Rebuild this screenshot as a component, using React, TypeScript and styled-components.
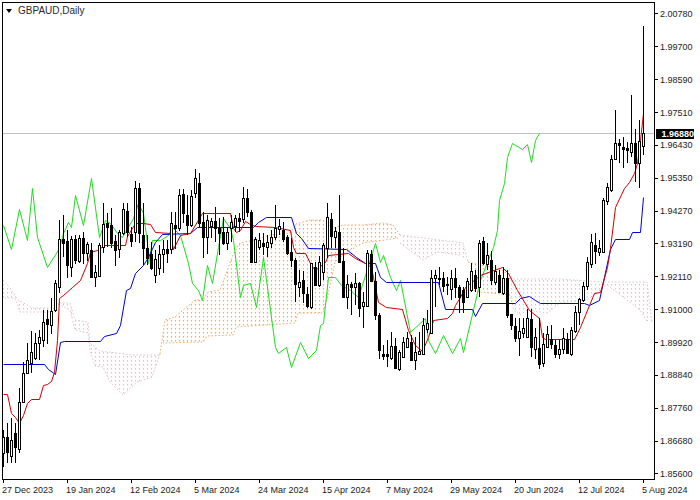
import React from "react";
import styled, { createGlobalStyle } from "styled-components";

const GlobalStyle = createGlobalStyle`
  html, body {
    margin: 0;
    padding: 0;
    background: #fff;
  }
`;

const Page = styled.div`
  width: 700px;
  height: 500px;
  overflow: hidden;
  background: #fff;
  color: #1c1c1c;
  font-family: "Liberation Sans", Arial, sans-serif;
  font-size: 9px;
  padding: 2px 0 0 2px;
  box-sizing: border-box;
`;
const Main = styled.div`
  display: flex;
  height: 478px;
`;
const Plot = styled.div`
  position: relative;
  width: 653px;
  height: 478px;
  box-sizing: border-box;
  border: 1px solid #000;
`;
const Canvas = styled.svg`
  display: block;
  width: 651px;
  height: 476px;
`;
const Title = styled.div`
  position: absolute;
  top: 2px;
  left: 3px;
  display: flex;
  align-items: center;
  gap: 6px;
  font-size: 10px;
  line-height: 12px;
  color: #2a2a2a;
`;
const Arrow = styled.i`
  width: 0;
  height: 0;
  border-left: 3.5px solid transparent;
  border-right: 3.5px solid transparent;
  border-top: 4px solid #000;
`;
const PriceAxis = styled.div`
  position: relative;
  display: flex;
  flex-direction: column;
  gap: 21px;
  padding-top: 6px;
`;
const PriceRow = styled.div`
  display: flex;
  align-items: center;
  height: 12px;
  gap: 2px;
`;
const PriceTick = styled.i`
  width: 3px;
  height: 1px;
  background: #000;
`;
const PriceTag = styled.div`
  position: absolute;
  top: 127px;
  left: 1px;
  width: 38px;
  height: 10px;
  background: #000;
  color: #fff;
  font-weight: 700;
  font-size: 9px;
  line-height: 10px;
  text-align: right;
`;
const TimeAxis = styled.div`
  display: flex;
`;
const TimeCell = styled.div`
  flex: none;
  width: 64px;
  white-space: nowrap;
`;
const TimeTick = styled.i`
  display: block;
  width: 1px;
  height: 3px;
  margin-left: 1px;
  background: #000;
`;
const TimeLabel = styled.div`
  line-height: 12px;
  margin-top: 1px;
`;
const Trace = styled.polyline<{ $color: string }>`
  fill: none;
  stroke: ${(p) => p.$color};
  stroke-width: 1;
  stroke-linejoin: round;
`;
const Edge = styled.polyline<{ $color: string }>`
  fill: none;
  stroke: ${(p) => p.$color};
  stroke-width: 1;
  stroke-dasharray: 1.5 2;
`;
const HatchLine = styled.line<{ $color: string }>`
  stroke: ${(p) => p.$color};
  stroke-width: 1.2;
  stroke-dasharray: 1.5 2.5;
`;
const Wick = styled.line`
  stroke: #000;
  stroke-width: 1;
  shape-rendering: crispEdges;
`;
const Body = styled.rect<{ $up: boolean }>`
  fill: ${(p) => (p.$up ? "#fff" : "#000")};
  stroke: #000;
  stroke-width: 1;
  shape-rendering: crispEdges;
`;

const prices = [
  "2.00780", "1.99700", "1.98590", "1.97510", "1.96430", "1.95350", "1.94270", "1.93190",
  "1.92110", "1.91000", "1.89920", "1.88840", "1.87760", "1.86680", "1.85600",
];
const dates = [
  "27 Dec 2023", "19 Jan 2024", "12 Feb 2024", "5 Mar 2024", "24 Mar 2024", "15 Apr 2024",
  "7 May 2024", "29 May 2024", "20 Jun 2024", "12 Jul 2024", "5 Aug 2024",
];

// high, body top, body bottom, low, hollow
const candles: [number, number, number, number, number][] = [
  [430, 437, 453, 467, 1], [423, 437, 452, 463, 0], [418, 440, 456, 463, 1], [423, 433, 447, 463, 0],
  [388, 402, 449, 453, 1], [362, 373, 402, 403, 1], [343, 360, 373, 374, 1], [331, 352, 363, 373, 1],
  [333, 343, 358, 360, 1], [330, 337, 343, 360, 1], [310, 322, 340, 347, 1], [310, 319, 324, 344, 0],
  [298, 311, 325, 334, 1], [280, 283, 310, 312, 1], [220, 239, 287, 293, 1], [215, 239, 243, 257, 0],
  [230, 241, 265, 278, 0], [236, 239, 267, 277, 1], [235, 239, 260, 264, 0], [235, 238, 261, 263, 1],
  [232, 238, 253, 264, 0], [242, 244, 253, 261, 1], [243, 250, 277, 277, 0], [265, 272, 277, 287, 1],
  [243, 245, 276, 277, 1], [203, 224, 247, 253, 1], [213, 223, 227, 247, 0], [208, 225, 243, 248, 0],
  [235, 241, 250, 266, 0], [230, 232, 249, 258, 1], [203, 209, 233, 235, 1], [203, 211, 232, 237, 0],
  [227, 234, 241, 247, 0], [181, 188, 232, 242, 1], [183, 188, 233, 243, 0], [203, 235, 248, 265, 0],
  [235, 248, 258, 265, 0], [242, 254, 268, 270, 0], [250, 259, 275, 283, 1], [245, 254, 268, 275, 1],
  [240, 249, 254, 273, 1], [240, 249, 253, 263, 0], [212, 223, 249, 254, 1], [212, 225, 228, 249, 0],
  [189, 195, 228, 231, 1], [189, 194, 213, 223, 0], [195, 215, 225, 235, 0], [190, 196, 225, 227, 1],
  [169, 178, 193, 198, 1], [173, 183, 223, 227, 0], [212, 222, 237, 258, 0], [215, 220, 237, 254, 1],
  [218, 221, 226, 238, 1], [207, 221, 228, 242, 0], [218, 228, 233, 255, 0], [217, 232, 243, 245, 0],
  [227, 232, 243, 250, 1], [215, 222, 228, 242, 1], [215, 218, 226, 232, 1], [213, 218, 221, 232, 0],
  [187, 198, 219, 223, 1], [189, 198, 212, 217, 0], [210, 212, 262, 263, 0], [237, 239, 262, 263, 1],
  [233, 240, 247, 250, 1], [233, 243, 246, 255, 0], [235, 242, 247, 257, 1], [230, 237, 243, 248, 1],
  [205, 228, 237, 240, 1], [219, 226, 229, 235, 1], [222, 230, 239, 242, 0], [235, 237, 253, 255, 0],
  [238, 252, 260, 267, 0], [258, 260, 284, 302, 0], [270, 282, 287, 297, 1], [271, 280, 293, 303, 0],
  [287, 294, 306, 308, 0], [263, 263, 307, 309, 1], [262, 267, 285, 286, 0], [256, 262, 285, 287, 1],
  [243, 245, 272, 280, 1], [203, 217, 248, 258, 1], [213, 219, 236, 248, 0], [227, 231, 237, 248, 1],
  [195, 232, 262, 263, 0], [248, 261, 297, 298, 0], [275, 284, 297, 309, 1], [282, 284, 287, 315, 0],
  [273, 283, 287, 305, 1], [282, 283, 308, 317, 0], [292, 302, 306, 328, 1], [250, 253, 306, 307, 1],
  [250, 254, 281, 282, 0], [272, 281, 315, 320, 0], [313, 315, 350, 359, 0], [345, 354, 356, 360, 0],
  [340, 354, 356, 367, 0], [332, 346, 358, 360, 1], [338, 346, 368, 369, 0], [350, 352, 369, 371, 1],
  [337, 342, 357, 358, 1], [332, 338, 347, 348, 1], [335, 342, 360, 360, 0], [337, 352, 360, 370, 1],
  [332, 351, 354, 354, 1], [318, 325, 354, 355, 1], [310, 323, 329, 333, 1], [270, 278, 333, 334, 1],
  [270, 275, 278, 307, 1], [267, 278, 279, 285, 0], [272, 278, 286, 292, 0], [277, 284, 285, 295, 0],
  [270, 278, 289, 300, 1], [268, 278, 287, 298, 0], [285, 287, 297, 313, 0], [287, 290, 302, 313, 0],
  [278, 281, 297, 298, 1], [263, 271, 290, 292, 1], [270, 275, 288, 292, 0], [240, 243, 287, 297, 1],
  [237, 241, 263, 265, 0], [243, 255, 264, 270, 1], [251, 260, 280, 285, 0], [265, 271, 282, 285, 1],
  [270, 275, 292, 293, 0], [267, 278, 293, 295, 1], [270, 278, 315, 318, 0], [314, 314, 325, 330, 0],
  [318, 326, 338, 342, 0], [318, 331, 338, 356, 1], [318, 328, 333, 338, 1], [309, 318, 337, 338, 1],
  [309, 319, 347, 357, 0], [328, 337, 349, 359, 1], [318, 348, 364, 369, 0], [333, 344, 363, 367, 1],
  [326, 334, 347, 348, 1], [325, 339, 344, 349, 0], [340, 345, 354, 358, 0], [340, 349, 354, 359, 1],
  [328, 338, 349, 354, 1], [333, 339, 353, 354, 0], [327, 330, 354, 356, 1], [306, 312, 331, 333, 1],
  [298, 299, 312, 325, 1], [282, 286, 300, 302, 1], [257, 262, 286, 290, 1], [234, 242, 264, 268, 1],
  [233, 245, 251, 264, 0], [240, 248, 252, 256, 1], [198, 200, 252, 252, 1], [183, 187, 201, 205, 1],
  [155, 159, 190, 192, 1], [110, 143, 159, 160, 1], [139, 143, 145, 163, 0], [137, 147, 149, 168, 0],
  [142, 148, 150, 163, 0], [95, 143, 152, 157, 1], [129, 143, 163, 182, 0], [120, 141, 163, 188, 1],
  [26, 133, 146, 155, 1],
];

const hatch = {
  orange: "#f4a868",
  thistle: "#e2c2cc",
};

const clouds = [
  {
    id: "cloudA",
    color: hatch.thistle,
    from: 3,
    to: 160,
    top: "3,280 10,288 18,300 33,308 50,308 58,303 70,303 75,320 88,322 90,343 100,351 133,355 160,355",
    bottom: "160,354 152,377 137,382 123,395 110,382 103,367 95,366 90,350 88,333 75,330 70,310 58,304 50,312 20,312 15,298 3,298",
  },
  {
    id: "cloudB",
    color: hatch.orange,
    from: 160,
    to: 400,
    top: "160,354 165,320 175,317 195,300 203,300 208,292 220,290 233,255 240,243 255,240 270,235 290,233 296,224 310,220 323,220 333,228 345,225 363,225 383,223 393,225 400,235",
    bottom: "398,238 385,240 363,243 345,253 335,262 328,295 323,313 298,313 295,323 236,327 233,335 207,336 203,342 163,343",
  },
  {
    id: "cloudC",
    color: hatch.thistle,
    from: 400,
    to: 468,
    top: "400,235 463,243 468,262",
    bottom: "460,255 437,252 423,260 400,243",
  },
  {
    id: "cloudD",
    color: hatch.orange,
    from: 468,
    to: 510,
    top: "468,262 480,265 497,268 505,272 510,279",
    bottom: "510,295 480,292 472,290",
  },
  {
    id: "cloudE",
    color: hatch.thistle,
    from: 510,
    to: 652,
    top: "510,279 560,279 600,282 647,282 652,322",
    bottom: "647,321 640,310 627,300 607,285 600,290 587,300 560,303 547,313 527,310 520,315 514,310 510,295",
  },
];

const red =
  "3,394 7,394 11,413 15,417 19,423 23,415 27,403 31,399 39,399 43,385 47,384 51,381 54,372 57,340 59,298 63,295 72,287 80,280 87,263 90,252 97,250 100,248 104,245 125,245 127,236 135,223 143,223 150,224 155,232 170,233 173,249 180,235 190,233 202,213 230,213 233,228 236,232 240,230 245,221 250,224 255,226 275,227 290,230 293,247 296,253 305,253 311,265 315,270 325,262 328,255 348,253 355,258 365,263 371,267 373,277 378,302 386,307 402,309 408,330 415,345 422,351 428,337 433,320 447,318 452,313 455,305 460,297 465,287 480,275 502,267 508,273 517,290 529,310 539,318 542,337 545,339 574,339 580,327 589,305 594,293 600,292 607,267 610,248 615,207 624,188 629,182 634,173 637,163 640,140 643,113";
const blue =
  "3,364 44,364 48,369 55,374 60,342 64,341 100,341 104,336 116,333 120,325 126,290 130,288 135,273 143,265 148,257 155,242 162,234 190,233 197,227 253,227 258,222 266,217 291,217 296,233 301,238 308,248 346,249 356,257 365,263 375,263 380,277 386,282 438,282 445,309 472,309 475,316 482,303 515,303 520,298 529,296 535,300 540,303 584,303 589,305 599,300 610,249 615,239 629,239 632,232 640,232 643,197";
const green =
  "3,225 11,249 19,209 27,240 32,188 37,237 47,267 59,248 63,233 68,222 71,227 75,195 83,225 91,178 99,237 105,220 110,223 117,233 122,237 133,218 138,203 143,213 147,243 148,263 152,240 160,240 168,235 172,227 180,235 188,263 192,283 198,290 202,300 207,265 212,283 218,247 223,218 230,228 233,240 240,297 243,285 250,283 256,307 263,257 275,347 278,353 286,347 291,367 300,342 308,358 316,350 320,325 323,323 328,277 335,277 341,285 350,290 358,297 365,275 375,243 380,262 383,255 390,277 396,290 400,280 410,332 425,318 428,340 435,353 443,335 452,353 460,338 463,352 480,280 493,247 497,230 499,200 504,183 507,157 512,143 522,149 527,144 531,162 535,140 539,133";

const hatchColumns = (from: number, to: number) => {
  const columns: number[] = [];
  for (let x = from - ((from - 3) % 4); x <= to; x += 4) columns.push(x);
  return columns;
};

const App = () => {
  return (
    <Page>
      <GlobalStyle />
      <Main>
        <Plot>
          <Canvas viewBox="3 3 651 476">
            <defs>
              {clouds.map((c) => (
                <clipPath key={c.id} id={c.id}>
                  <polygon points={`${c.top} ${c.bottom}`} />
                </clipPath>
              ))}
            </defs>
            {clouds.map((c) => (
              <g key={c.id}>
                <g clipPath={`url(#${c.id})`}>
                  {hatchColumns(c.from, c.to).map((x) => (
                    <HatchLine key={x} x1={x + 0.5} x2={x + 0.5} y1={200} y2={400} $color={c.color} />
                  ))}
                </g>
                <Edge points={c.top} $color={c.color} />
                <Edge points={c.bottom} $color={c.color} />
              </g>
            ))}
            <line x1="3" x2="654" y1="133.5" y2="133.5" stroke="#c0c0c0" />
            <g transform="translate(0.5 0.5)">
              <Trace points={green} $color="#1fdc1f" />
              <Trace points={blue} $color="#0000d8" />
              <Trace points={red} $color="#d00000" />
            </g>
            {candles.map(([high, top, bottom, low, up], i) => {
              const x = 3 + i * 4;
              return (
                <g key={i}>
                  <Wick x1={x + 0.5} x2={x + 0.5} y1={high} y2={low} />
                  <Body x={x - 0.5} y={top + 0.5} width={2} height={Math.max(bottom - top, 1)} $up={!!up} />
                </g>
              );
            })}
          </Canvas>
          <Title>
            <Arrow />
            GBPAUD,Daily
          </Title>
        </Plot>
        <PriceAxis>
          {prices.map((p) => (
            <PriceRow key={p}>
              <PriceTick />
              {p}
            </PriceRow>
          ))}
          <PriceTag>1.96880</PriceTag>
        </PriceAxis>
      </Main>
      <TimeAxis>
        {dates.map((d) => (
          <TimeCell key={d}>
            <TimeTick />
            <TimeLabel>{d}</TimeLabel>
          </TimeCell>
        ))}
      </TimeAxis>
    </Page>
  );
};

export default App;
